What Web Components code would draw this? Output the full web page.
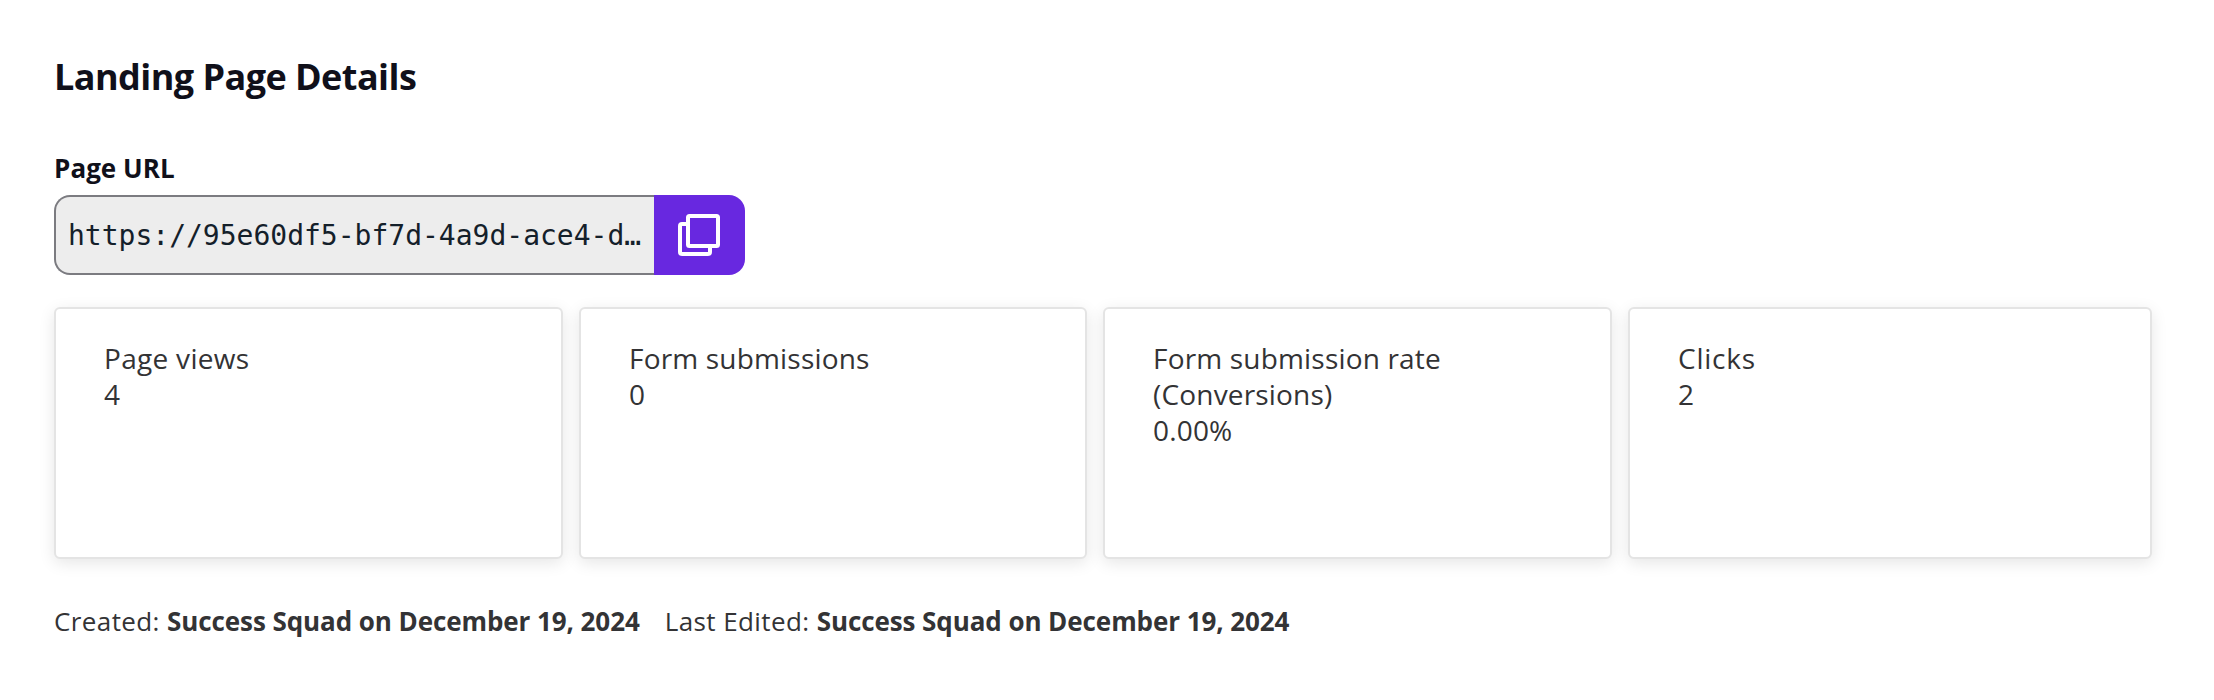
<!DOCTYPE html>
<html lang="en">
<head>
<meta charset="utf-8">
<title>Landing Page Details</title>
<style>
  body {
    margin: 0;
    background: #fff;
    color: #333335;
    font-family: "Open Sans", sans-serif;
  }
</style>
</head>
<body>
<landing-page-details></landing-page-details>

<script>
const copyTemplate = document.createElement('template')
copyTemplate.innerHTML = `
<style>
  :host {
    display: block;
  }
  .label {
    color: #10101a;
    font-size: 26px;
    font-weight: 700;
    line-height: 36px;
    letter-spacing: .05px;
  }
  .field {
    display: flex;
    width: 691px;
    height: 80px;
    margin-top: 9px;
  }
  .url {
    box-sizing: border-box;
    width: 600px;
    padding: 0 12px;
    border: 2px solid #7b7b80;
    border-right: 0;
    border-radius: 16px 0 0 16px;
    background: #ededed;
    color: #14202a;
    font: 28px/78px "DejaVu Sans Mono", monospace;
    white-space: nowrap;
  }
  button {
    display: flex;
    align-items: center;
    justify-content: center;
    width: 91px;
    padding: 0 1px 0 0;
    border: 0;
    border-radius: 0 16px 16px 0;
    background: #6828e0;
  }
</style>
<div class="label"><slot name="label"></slot></div>
<div class="field">
  <div class="url"><slot></slot></div>
  <button type="button" aria-label="Copy">
    <svg width="42" height="42" viewBox="0 0 42 42" fill="none" stroke="#fff" stroke-width="4" stroke-linejoin="round">
      <rect x="10" y="2" width="30" height="30" rx="1.5"/>
      <path d="M10 10H4Q2 10 2 12V38Q2 40 4 40H30Q32 40 32 38V32"/>
    </svg>
  </button>
</div>
`

customElements.define('copy-field',
  /**
   * Represents a read-only field with a copy button.
   */
  class extends HTMLElement {
    constructor () {
      super()

      this.attachShadow({ mode: 'open' })
        .appendChild(copyTemplate.content.cloneNode(true))
    }
  }
)

const cardTemplate = document.createElement('template')
cardTemplate.innerHTML = `
<style>
  :host {
    display: block;
    box-sizing: border-box;
    height: 252px;
    padding: 31px 48px;
    border: 2px solid #e4e4e4;
    border-radius: 6px;
    background: #fff;
    box-shadow: 0 4px 16px rgba(0, 0, 0, .1);
    font-size: 28px;
    line-height: 36px;
    letter-spacing: .18px;
  }
</style>
<div><slot></slot></div>
<div><slot name="value"></slot></div>
`

customElements.define('stat-card',
  /**
   * Represents a card with one statistic.
   */
  class extends HTMLElement {
    constructor () {
      super()

      this.attachShadow({ mode: 'open' })
        .appendChild(cardTemplate.content.cloneNode(true))
    }
  }
)

const detailsTemplate = document.createElement('template')
detailsTemplate.innerHTML = `
<style>
  :host {
    display: block;
    box-sizing: border-box;
    height: 700px;
    padding: 52px 62px 0 54px;
  }
  h2 {
    margin: 0;
    color: #10101a;
    font-size: 36px;
    font-weight: 700;
    line-height: 50px;
    letter-spacing: -.55px;
  }
  copy-field {
    margin-top: 48px;
  }
  .stats {
    display: grid;
    grid-template-columns: 509px 508px 509px 524px;
    gap: 16px;
    margin-top: 32px;
  }
  .views {
    letter-spacing: .3px;
  }
  .clicks {
    letter-spacing: .75px;
  }
  .meta {
    display: flex;
    gap: 25px;
    margin-top: 44px;
    font-size: 26px;
    line-height: 36px;
    letter-spacing: .4px;
    white-space: nowrap;
  }
  b {
    font-weight: 700;
    letter-spacing: -.08px;
  }
</style>
<h2>Landing Page Details</h2>
<copy-field>
  <span slot="label">Page URL</span>https://95e60df5-bf7d-4a9d-ace4-d…
</copy-field>
<div class="stats">
  <stat-card class="views">Page views<span slot="value">4</span></stat-card>
  <stat-card>Form submissions<span slot="value">0</span></stat-card>
  <stat-card>Form submission rate<br>(Conversions)<span slot="value">0.00%</span></stat-card>
  <stat-card class="clicks">Clicks<span slot="value">2</span></stat-card>
</div>
<div class="meta">
  <span>Created: <b>Success Squad on December 19, 2024</b></span>
  <span>Last Edited: <b>Success Squad on December 19, 2024</b></span>
</div>
`

customElements.define('landing-page-details',
  /**
   * Represents the details of a landing page.
   */
  class extends HTMLElement {
    constructor () {
      super()

      this.attachShadow({ mode: 'open' })
        .appendChild(detailsTemplate.content.cloneNode(true))
    }
  }
)
</script>
</body>
</html>
